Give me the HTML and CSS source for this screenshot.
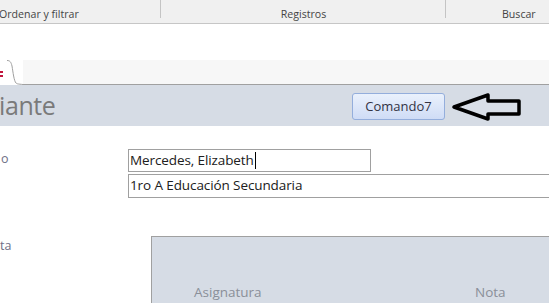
FILE: index.html
```html
<!DOCTYPE html>
<html>
	<head>
		<meta charset="utf-8">
		<title>Estudiante</title>
		<link rel="stylesheet" href="styles.css">
	</head>

	<body>
		<header class="ribbon">
			<div class="group group-sort">Ordenar y filtrar</div>
			<div class="group group-records">Registros</div>
			<div class="group group-find">Buscar</div>
		</header>

		<div class="blank"></div>

		<nav class="tabs">
			<div class="tab">
				<span class="tab-mark"></span>
				<svg class="tab-edge" width="20" height="25" viewBox="0 0 20 25">
					<path d="M0 0 L4 0 C7 0 8 2 9 6 C10 12 11 21 13 23 C14 24 15 24 20 24 L20 25 L0 25 Z" fill="#ffffff"/>
					<path d="M4 0.5 C7 0.5 8 2 9 6 C10 12 11 21 13 23 C14 24 15 24 20 24.5" fill="none" stroke="#a0a0a0" stroke-width="1"/>
				</svg>
			</div>
			<div class="tab-rest"></div>
		</nav>

		<section class="band">
			<h1 class="title">iante</h1>
			<button class="command">Comando7</button>
			<svg class="arrow" width="72" height="30" viewBox="0 0 72 30">
				<path d="M3 15 L37 3 L37 9 L68 9 L68 22 L37 22 L37 27 Z" fill="#d9dfe8" stroke="#000000" stroke-width="3.5" stroke-linejoin="round"/>
			</svg>
		</section>

		<main class="form">
			<div class="row row-name">
				<label class="label">o</label>
				<div class="field field-name">Mercedes, Elizabeth<span class="caret"></span></div>
			</div>
			<div class="row row-course">
				<span class="label"></span>
				<div class="field field-course">1ro A Educación Secundaria</div>
			</div>
			<div class="row row-grades">
				<label class="label label-grades">ta</label>
				<div class="subform">
					<span class="col col-subject">Asignatura</span>
					<span class="col col-grade">Nota</span>
				</div>
			</div>
		</main>
	</body>

</html>
```

FILE: styles.css
```css
html, body {
	margin: 0;
	padding: 0;
	overflow: hidden;
	background: #ffffff;
}
body {
	width: 549px;
	height: 303px;
	font-family: "Open Sans", "Noto Sans", sans-serif;
}

/* ribbon group labels */
.ribbon {
	display: grid;
	grid-template-columns: 161px 285px 1fr;
	height: 23px;
	background: #f0f0f0;
	border-bottom: 1px solid #c6c6c6;
	font-size: 10.6px;
	color: #444444;
}
.group {
	line-height: 29px;
	height: 23px;
	white-space: nowrap;
}
.group-sort,
.group-records {
	background: linear-gradient(#c4c4c4, #c4c4c4) right top / 1px 18px no-repeat;
}
.group-sort {
	margin-left: -1px;
}
.group-records {
	text-align: center;
}
.group-find {
	padding-left: 56px;
}

.blank {
	height: 36px;
}

/* object tabs */
.tabs {
	height: 25px;
	background: #f7f7f7;
	display: flex;
}
.tab {
	display: flex;
	background: #ffffff;
}
.tab-mark {
	width: 3px;
	height: 6px;
	margin-top: 11px;
	border-top: 2px solid #c0143c;
	border-bottom: 2px solid #c0143c;
	box-sizing: border-box;
}
.tab-rest {
	flex: 1;
	border-bottom: 1px solid #a0a0a0;
}

/* form header */
.band {
	display: flex;
	align-items: center;
	height: 41px;
	background: #d6dce5;
	padding-right: 26px;
}
.title {
	flex: 1;
	margin: 0 0 0 -1px;
	font-family: "Open Sans", sans-serif;
	font-weight: 400;
	font-size: 25px;
	color: #7a7a7a;
	line-height: 41px;
	letter-spacing: -0.4px;
}
.command {
	width: 93px;
	height: 27px;
	margin-right: 6px;
	margin-top: 1px;
	border: 1px solid #94aedc;
	border-radius: 3px;
	background: linear-gradient(#eaf1fc, #cfdcf6);
	font-family: "Open Sans", sans-serif;
	font-size: 13px;
	color: #333344;
	padding: 0;
}
.arrow {
	display: block;
	margin-top: 3px;
}

/* form body */
.form {
	padding-top: 23px;
}
.row {
	display: grid;
	grid-template-columns: 128px 1fr;
}
.label {
	font-size: 12.5px;
	color: #6f6f86;
	padding-left: 1px;
	line-height: 20px;
}
.field {
	height: 21px;
	border: 1px solid #a0a0a0;
	font-size: 13.5px;
	line-height: 21px;
	color: #202020;
	padding-left: 1px;
	white-space: nowrap;
	overflow: hidden;
	letter-spacing: -0.1px;
}
.field-name {
	width: 240px;
}
.caret {
	display: inline-block;
	width: 1px;
	height: 17px;
	margin-left: 1px;
	background: #000000;
	vertical-align: -4px;
}
.row-course {
	margin-top: 2px;
}
.field-course {
	height: 22px;
	border-right: none;
}
.row-grades {
	margin-top: 38px;
	grid-template-columns: 151px 1fr;
}
.label-grades {
	margin-top: 0;
	margin-left: -1px;
}
.subform {
	height: 80px;
	background: #d6dce5;
	border: 1px solid #a0a0a0;
	border-right: none;
	display: flex;
	align-items: flex-end;
	padding-bottom: 14px;
	box-sizing: border-box;
	font-size: 13.5px;
	color: #8a8f99;
}
.col-subject {
	margin-left: 42px;
	width: 281px;
}
```
